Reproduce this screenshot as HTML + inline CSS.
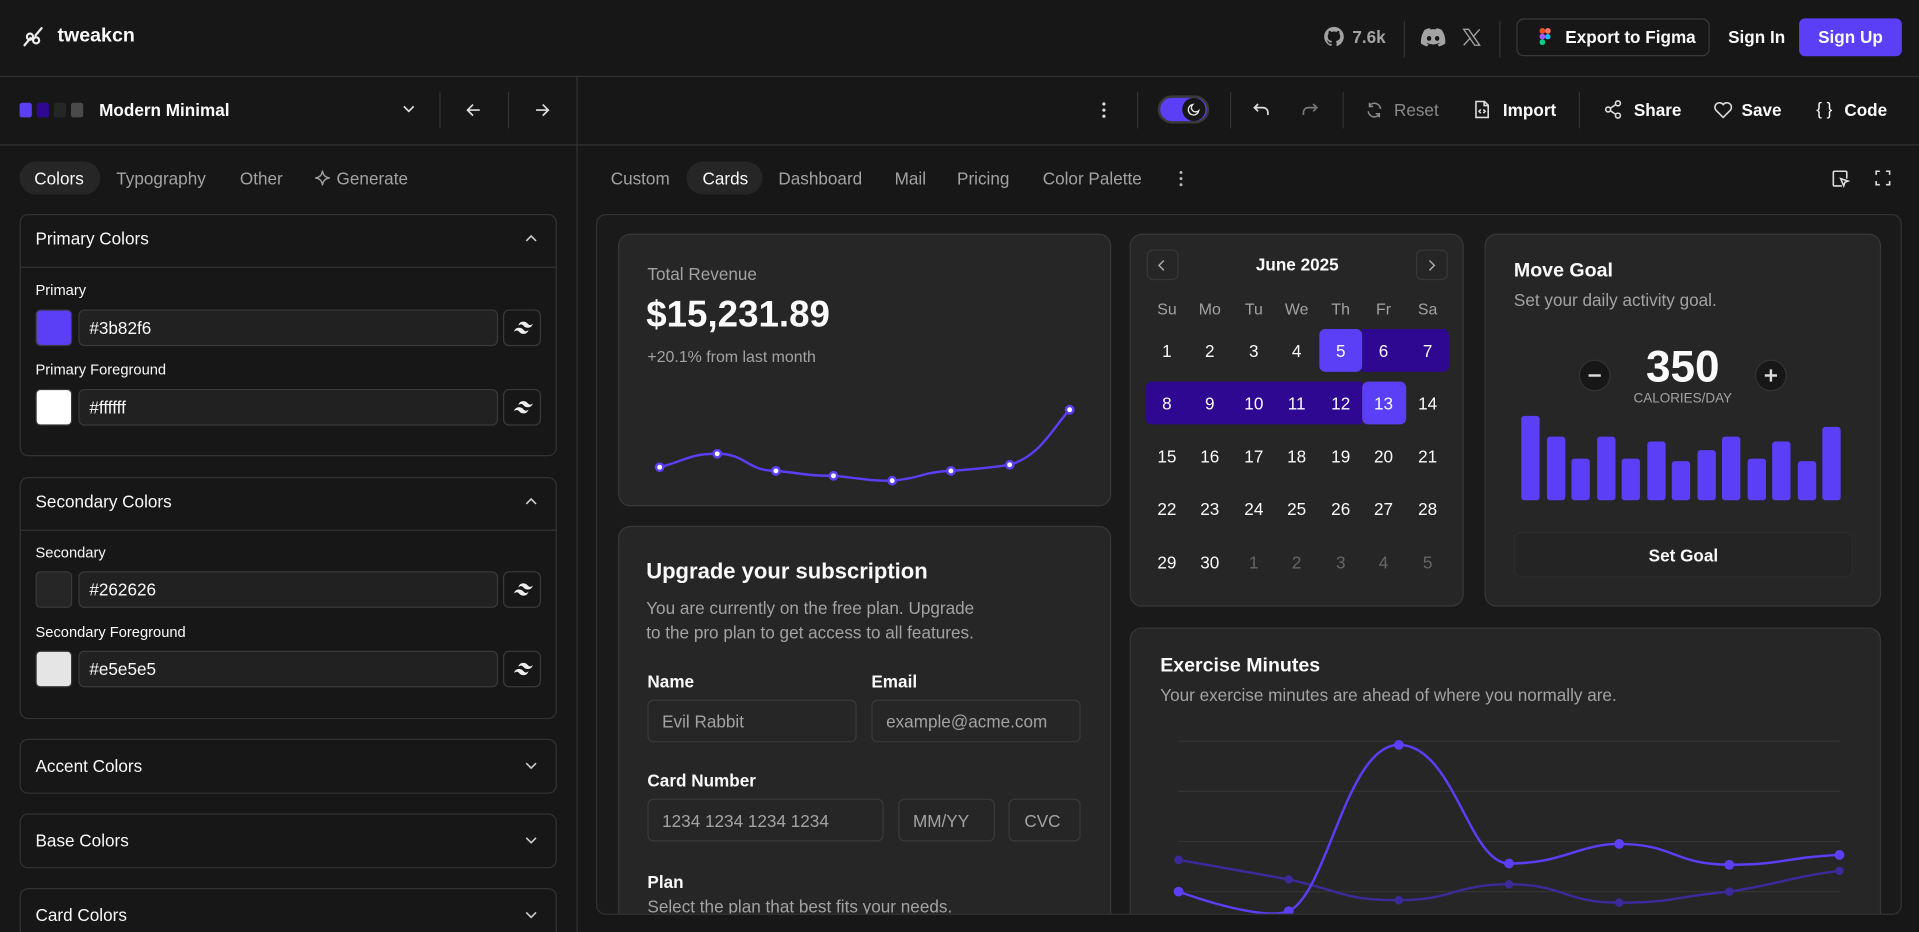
<!DOCTYPE html>
<html><head><meta charset="utf-8">
<style>
*{box-sizing:border-box;margin:0;padding:0}
html,body{width:1919px;height:932px;overflow:hidden;background:#171717}
body{font-family:"Liberation Sans",sans-serif;color:#fafafa;position:relative}
#s{position:absolute;left:0;top:0;width:1568px;height:762px;overflow:hidden;transform:scale(1.22385,1.2231);transform-origin:0 0;background:#171717}
.a{position:absolute}
.t{position:absolute;white-space:nowrap;line-height:1}
.g{color:#a3a3a3}
.hl{position:absolute;background:#333;height:1px}
.vl{position:absolute;background:#333;width:1px}
.card{position:absolute;background:#262626;border:1px solid #383838;border-radius:10px;overflow:hidden}
.box{position:absolute;border:1px solid #333;border-radius:7px;background:#171717}
.inp{position:absolute;border:1px solid #3a3a3a;border-radius:5px;background:#212121}
svg{position:absolute;overflow:visible}
.cal{position:absolute;width:35px;text-align:center;font-size:14px;line-height:1}
.tw{position:absolute;width:31px;height:30px;border:1px solid #3a3a3a;border-radius:5px;background:#171717}
.tw svg{left:8px;top:9px}
</style></head><body><div id="s">

<!-- header -->
<svg style="left:18px;top:21px" width="18" height="18" viewBox="0 0 18 18" fill="none" stroke="#eee" stroke-width="1.8" stroke-linecap="round"><path d="M2 16 L7 10 M11 8 L16 2 M4 9 a2.5 2.5 0 1 0 5 0 a2.5 2.5 0 1 0 -5 0 M9 12 a2.5 2.5 0 1 0 5 0 a2.5 2.5 0 1 0 -5 0"/></svg>
<div class="t" style="left:47px;top:22px;font-size:16px;font-weight:700">tweakcn</div>

<svg style="left:1082px;top:22px" width="16" height="16" viewBox="0 0 16 16"><path fill="#a3a3a3" d="M8 0C3.6 0 0 3.6 0 8c0 3.5 2.3 6.5 5.5 7.6.4.1.5-.2.5-.4v-1.4c-2.2.5-2.7-1-2.7-1-.4-.9-.9-1.2-.9-1.2-.7-.5.1-.5.1-.5.8.1 1.2.8 1.2.8.7 1.2 1.9.9 2.300.7.1-.5.3-.9.5-1.1-1.8-.2-3.600-.9-3.600-4 0-.9.3-1.600.8-2.1-.1-.2-.4-1 .1-2.1 0 0 .7-.2 2.2.8.6-.2 1.3-.3 2-.3s1.4.1 2 .3c1.5-1 2.2-.8 2.2-.8.4 1.1.2 1.9.1 2.1.5.6.8 1.3.8 2.1 0 3.1-1.9 3.8-3.6 4 .3.3.6.8.6 1.5v2.2c0 .2.1.5.6.4C13.7 14.5 16 11.5 16 8c0-4.4-3.6-8-8-8z"/></svg>
<div class="t g" style="left:1105px;top:23px;font-size:14px;font-weight:700">7.6k</div>
<div class="vl" style="left:1147px;top:17px;height:30px"></div>
<svg style="left:1161px;top:23px" width="20" height="15" viewBox="0 0 20 15"><path fill="#a3a3a3" d="M16.9 1.3A16.5 16.5 0 0 0 12.8 0l-.5 1a15 15 0 0 0-4.6 0L7.2 0a16.5 16.5 0 0 0-4.1 1.3C.5 5.2-.2 9 .1 12.7A16.6 16.6 0 0 0 5.2 15l1-1.7a10.7 10.7 0 0 1-1.6-.8l.4-.3a11.8 11.8 0 0 0 10 0l.4.3-1.6.8 1 1.7a16.5 16.5 0 0 0 5.1-2.3c.4-4.3-.7-8.1-3-11.4zM6.7 10.4c-1 0-1.8-.9-1.8-2s.8-2 1.8-2 1.8.9 1.8 2-.8 2-1.8 2zm6.6 0c-1 0-1.8-.9-1.8-2s.8-2 1.8-2 1.8.9 1.8 2-.8 2-1.8 2z"/></svg>
<svg style="left:1195px;top:23px" width="15" height="15" viewBox="0 0 15 15" fill="none" stroke="#a3a3a3" stroke-width="1.1"><path d="M1 1h4l9 13h-4z M14 1L8.5 7.3 M1 14l5.6-6.3"/></svg>
<div class="vl" style="left:1225px;top:17px;height:30px"></div>
<div class="a" style="left:1239px;top:15px;width:158px;height:31px;border:1px solid #3a3a3a;border-radius:6px"></div>
<svg style="left:1258px;top:23px" width="9" height="14" viewBox="0 0 9 14"><rect x="0" y="0" width="4.5" height="4.6" rx="2" fill="#f24e1e"/><rect x="4.5" y="0" width="4.5" height="4.6" rx="2" fill="#ff7262"/><rect x="0" y="4.6" width="4.5" height="4.6" rx="2" fill="#a259ff"/><circle cx="6.7" cy="7" r="2.2" fill="#1abcfe"/><rect x="0" y="9.2" width="4.5" height="4.6" rx="2" fill="#0acf83"/></svg>
<div class="t" style="left:1279px;top:23px;font-size:14px;font-weight:700">Export to Figma</div>
<div class="t" style="left:1412px;top:23px;font-size:14px;font-weight:700">Sign In</div>
<div class="a" style="left:1470px;top:15px;width:84px;height:31px;background:#5b3ff6;border-radius:5px"></div>
<div class="t" style="left:1470px;top:23px;width:84px;text-align:center;font-size:14px;font-weight:700">Sign Up</div>

<div class="hl" style="left:0;top:62px;width:1568px"></div>

<!-- row2 left -->
<div class="a" style="left:16px;top:84px;width:10px;height:12px;background:#5b3ff6;border-radius:2px"></div>
<div class="a" style="left:30px;top:84px;width:10px;height:12px;background:#2e0891;border-radius:2px"></div>
<div class="a" style="left:44px;top:84px;width:10px;height:12px;background:#262626;border-radius:2px"></div>
<div class="a" style="left:58px;top:84px;width:10px;height:12px;background:#4a4a4a;border-radius:2px"></div>
<div class="t" style="left:81px;top:83px;font-size:14px;font-weight:700">Modern Minimal</div>
<svg style="left:329px;top:86px" width="10" height="7" viewBox="0 0 10 7" fill="none" stroke="#ddd" stroke-width="1.4"><path d="M1 1l4 4 4-4"/></svg>
<div class="vl" style="left:359px;top:75px;height:30px"></div>
<svg style="left:381px;top:84px" width="12" height="12" viewBox="0 0 12 12" fill="none" stroke="#ddd" stroke-width="1.4"><path d="M11 6H1M5.5 1.5L1 6l4.5 4.5"/></svg>
<div class="vl" style="left:415px;top:75px;height:30px"></div>
<svg style="left:437px;top:84px" width="12" height="12" viewBox="0 0 12 12" fill="none" stroke="#ddd" stroke-width="1.4"><path d="M1 6h10M6.5 1.5L11 6l-4.5 4.5"/></svg>
<div class="vl" style="left:471px;top:63px;height:699px"></div>

<!-- row2 right -->
<svg style="left:900px;top:83px" width="4" height="14"><circle cx="2" cy="2" r="1.3" fill="#ddd"/><circle cx="2" cy="7" r="1.3" fill="#ddd"/><circle cx="2" cy="12" r="1.3" fill="#ddd"/></svg>
<div class="vl" style="left:929px;top:75px;height:30px"></div>
<div class="a" style="left:946px;top:78px;width:42px;height:23px;border-radius:12px;background:#5b3ff6;border:2px solid #3a3a3a"></div>
<div class="a" style="left:966px;top:80px;width:19px;height:19px;border-radius:50%;background:#171717"></div>
<svg style="left:970px;top:84px" width="11" height="11" viewBox="0 0 11 11" fill="none" stroke="#eee" stroke-width="1.1"><path d="M9.5 6.5A4.3 4.3 0 1 1 4.5 1.5a3.3 3.3 0 0 0 5 5z"/></svg>
<div class="vl" style="left:1005px;top:75px;height:30px"></div>
<svg style="left:1024px;top:84px" width="14" height="11" viewBox="0 0 14 11" fill="none" stroke="#ddd" stroke-width="1.4"><path d="M4 1L1 4l3 3M1 4h7a4 4 0 0 1 4 4v2"/></svg>
<svg style="left:1063px;top:84px" width="14" height="11" viewBox="0 0 14 11" fill="none" stroke="#777" stroke-width="1.4"><path d="M10 1l3 3-3 3M13 4H6a4 4 0 0 0-4 4v2"/></svg>
<div class="vl" style="left:1097px;top:75px;height:30px"></div>
<svg style="left:1116px;top:83px" width="14" height="14" viewBox="0 0 14 14" fill="none" stroke="#8a8a8a" stroke-width="1.3"><path d="M12 6a5 5 0 0 0-9-2.5M2 8a5 5 0 0 0 9 2.5M3 1v3h3M11 13v-3H8"/></svg>
<div class="t" style="left:1139px;top:83px;font-size:14px;color:#8a8a8a">Reset</div>
<svg style="left:1205px;top:82px" width="12" height="15" viewBox="0 0 12 15" fill="none" stroke="#ddd" stroke-width="1.3"><path d="M1 1h7l3 3v10H1z M7.7 1v3.3H11 M5 7.5l-1.5 1.5L5 10.5M7 7.5l1.5 1.5L7 10.5"/></svg>
<div class="t" style="left:1228px;top:83px;font-size:14px;font-weight:700">Import</div>
<div class="vl" style="left:1290px;top:75px;height:30px"></div>
<svg style="left:1311px;top:82px" width="14" height="15" viewBox="0 0 14 15" fill="none" stroke="#ddd" stroke-width="1.3"><circle cx="11" cy="2.5" r="2"/><circle cx="3" cy="7.5" r="2"/><circle cx="11" cy="12.5" r="2"/><path d="M4.8 6.5l4.4-3M4.8 8.5l4.4 3"/></svg>
<div class="t" style="left:1335px;top:83px;font-size:14px;font-weight:700">Share</div>
<svg style="left:1400px;top:83px" width="16" height="14" viewBox="0 0 16 14" fill="none" stroke="#ddd" stroke-width="1.3"><path d="M8 13L2 7a3.5 3.5 0 0 1 6-4.5A3.5 3.5 0 0 1 14 7z"/></svg>
<div class="t" style="left:1423px;top:83px;font-size:14px;font-weight:700">Save</div>
<div class="t" style="left:1484px;top:82px;font-size:14px">{ }</div>
<div class="t" style="left:1507px;top:83px;font-size:14px;font-weight:700">Code</div>

<div class="hl" style="left:0;top:118px;width:1568px"></div>

<!-- tabs -->
<div class="a" style="left:16px;top:132px;width:66px;height:27px;border-radius:14px;background:#262626"></div>
<div class="t" style="left:28px;top:139px;font-size:14px">Colors</div>
<div class="t g" style="left:95px;top:139px;font-size:14px">Typography</div>
<div class="t g" style="left:196px;top:139px;font-size:14px">Other</div>
<svg style="left:257px;top:139px" width="13" height="13" viewBox="0 0 13 13" fill="none" stroke="#a3a3a3" stroke-width="1.1"><path d="M6.5 0.5Q7 6 12.5 6.5Q7 7 6.5 12.5Q6 7 0.5 6.5Q6 6 6.5 0.5z"/></svg>
<div class="t g" style="left:275px;top:139px;font-size:14px">Generate</div>

<div class="t g" style="left:499px;top:139px;font-size:14px">Custom</div>
<div class="a" style="left:561px;top:132px;width:62px;height:27px;border-radius:14px;background:#262626"></div>
<div class="t" style="left:574px;top:139px;font-size:14px">Cards</div>
<div class="t g" style="left:636px;top:139px;font-size:14px">Dashboard</div>
<div class="t g" style="left:731px;top:139px;font-size:14px">Mail</div>
<div class="t g" style="left:782px;top:139px;font-size:14px">Pricing</div>
<div class="t g" style="left:852px;top:139px;font-size:14px">Color Palette</div>
<svg style="left:963px;top:139px" width="4" height="14"><circle cx="2" cy="2" r="1.2" fill="#bbb"/><circle cx="2" cy="7" r="1.2" fill="#bbb"/><circle cx="2" cy="12" r="1.2" fill="#bbb"/></svg>
<svg style="left:1497px;top:139px" width="14" height="14" viewBox="0 0 14 14" fill="none" stroke="#ddd" stroke-width="1.3"><path d="M8 13H2a1 1 0 0 1-1-1V2a1 1 0 0 1 1-1h9a1 1 0 0 1 1 1v5 M7 7l6 2-2.5 1L9.5 13z"/></svg>
<svg style="left:1532px;top:139px" width="13" height="13" viewBox="0 0 13 13" fill="none" stroke="#ddd" stroke-width="1.3"><path d="M1 4V1h3M9 1h3v3M12 9v3H9M4 12H1V9"/></svg>

<!-- left panel boxes -->
<div class="box" style="left:16px;top:175px;width:439px;height:198px"></div>
<div class="hl" style="left:17px;top:218px;width:437px"></div>
<div class="t" style="left:29px;top:188px;font-size:14px">Primary Colors</div>
<svg style="left:429px;top:192px" width="10" height="6" viewBox="0 0 10 6" fill="none" stroke="#ccc" stroke-width="1.3"><path d="M1 5l4-4 4 4"/></svg>
<div class="t" style="left:29px;top:231px;font-size:12px">Primary</div>
<div class="a" style="left:29px;top:253px;width:30px;height:30px;border-radius:4px;background:#5b3ff6;border:1px solid #3a3a3a"></div>
<div class="inp" style="left:64px;top:253px;width:343px;height:30px"></div>
<div class="t" style="left:73px;top:261px;font-size:14px">#3b82f6</div>
<div class="tw" style="left:411px;top:253px"><svg width="14" height="10" viewBox="0 0 14 10" fill="#eee"><path d="M3.5 3.3C4.2.9 5.6 0 7.7 0c3 0 3.400 2.300 4.900 2.700 1 .3 1.900-.1 2.800-1.100C14.700 4 13.300 5 11.200 5 8.200 5 7.900 2.700 6.300 2.300c-1-.3-1.900.1-2.800 1zM0 8.300C.7 5.900 2.100 5 4.200 5c3 0 3.400 2.300 4.900 2.700 1 .3 1.900-.1 2.800-1.100-.7 2.400-2.100 3.400-4.200 3.400C4.700 10 4.400 7.700 2.800 7.300c-1-.3-1.900.1-2.800 1z"/></svg></div>
<div class="t" style="left:29px;top:296px;font-size:12px">Primary Foreground</div>
<div class="a" style="left:29px;top:318px;width:30px;height:30px;border-radius:4px;background:#fff;border:1px solid #3a3a3a"></div>
<div class="inp" style="left:64px;top:318px;width:343px;height:30px"></div>
<div class="t" style="left:73px;top:326px;font-size:14px">#ffffff</div>
<div class="tw" style="left:411px;top:318px"><svg width="14" height="10" viewBox="0 0 14 10" fill="#eee"><path d="M3.5 3.3C4.2.9 5.6 0 7.7 0c3 0 3.400 2.300 4.900 2.700 1 .3 1.900-.1 2.800-1.100C14.700 4 13.300 5 11.200 5 8.200 5 7.900 2.700 6.300 2.300c-1-.3-1.900.1-2.800 1zM0 8.300C.7 5.900 2.100 5 4.200 5c3 0 3.400 2.300 4.900 2.700 1 .3 1.900-.1 2.800-1.100-.7 2.400-2.100 3.400-4.200 3.400C4.700 10 4.400 7.700 2.800 7.300c-1-.3-1.900.1-2.800 1z"/></svg></div>

<div class="box" style="left:16px;top:390px;width:439px;height:198px"></div>
<div class="hl" style="left:17px;top:433px;width:437px"></div>
<div class="t" style="left:29px;top:403px;font-size:14px">Secondary Colors</div>
<svg style="left:429px;top:407px" width="10" height="6" viewBox="0 0 10 6" fill="none" stroke="#ccc" stroke-width="1.3"><path d="M1 5l4-4 4 4"/></svg>
<div class="t" style="left:29px;top:446px;font-size:12px">Secondary</div>
<div class="a" style="left:29px;top:467px;width:30px;height:30px;border-radius:4px;background:#262626;border:1px solid #3a3a3a"></div>
<div class="inp" style="left:64px;top:467px;width:343px;height:30px"></div>
<div class="t" style="left:73px;top:475px;font-size:14px">#262626</div>
<div class="tw" style="left:411px;top:467px"><svg width="14" height="10" viewBox="0 0 14 10" fill="#eee"><path d="M3.5 3.3C4.2.9 5.6 0 7.7 0c3 0 3.400 2.300 4.900 2.700 1 .3 1.900-.1 2.800-1.100C14.700 4 13.300 5 11.200 5 8.200 5 7.900 2.700 6.300 2.300c-1-.3-1.900.1-2.800 1zM0 8.300C.7 5.900 2.100 5 4.200 5c3 0 3.400 2.300 4.900 2.700 1 .3 1.900-.1 2.800-1.100-.7 2.400-2.100 3.400-4.200 3.400C4.700 10 4.400 7.700 2.800 7.300c-1-.3-1.900.1-2.800 1z"/></svg></div>
<div class="t" style="left:29px;top:511px;font-size:12px">Secondary Foreground</div>
<div class="a" style="left:29px;top:532px;width:30px;height:30px;border-radius:4px;background:#e5e5e5;border:1px solid #3a3a3a"></div>
<div class="inp" style="left:64px;top:532px;width:343px;height:30px"></div>
<div class="t" style="left:73px;top:540px;font-size:14px">#e5e5e5</div>
<div class="tw" style="left:411px;top:532px"><svg width="14" height="10" viewBox="0 0 14 10" fill="#eee"><path d="M3.5 3.3C4.2.9 5.6 0 7.7 0c3 0 3.400 2.300 4.900 2.700 1 .3 1.900-.1 2.800-1.100C14.700 4 13.300 5 11.200 5 8.200 5 7.900 2.700 6.300 2.300c-1-.3-1.900.1-2.800 1zM0 8.300C.7 5.900 2.100 5 4.200 5c3 0 3.400 2.300 4.900 2.700 1 .3 1.900-.1 2.800-1.100-.7 2.400-2.100 3.400-4.200 3.400C4.700 10 4.400 7.700 2.800 7.300c-1-.3-1.900.1-2.800 1z"/></svg></div>

<div class="box" style="left:16px;top:604px;width:439px;height:45px"></div>
<div class="t" style="left:29px;top:619px;font-size:14px">Accent Colors</div>
<svg style="left:429px;top:623px" width="10" height="6" viewBox="0 0 10 6" fill="none" stroke="#ccc" stroke-width="1.3"><path d="M1 1l4 4 4-4"/></svg>
<div class="box" style="left:16px;top:665px;width:439px;height:45px"></div>
<div class="t" style="left:29px;top:680px;font-size:14px">Base Colors</div>
<svg style="left:429px;top:684px" width="10" height="6" viewBox="0 0 10 6" fill="none" stroke="#ccc" stroke-width="1.3"><path d="M1 1l4 4 4-4"/></svg>
<div class="box" style="left:16px;top:726px;width:439px;height:45px"></div>
<div class="t" style="left:29px;top:741px;font-size:14px">Card Colors</div>
<svg style="left:429px;top:745px" width="10" height="6" viewBox="0 0 10 6" fill="none" stroke="#ccc" stroke-width="1.3"><path d="M1 1l4 4 4-4"/></svg>

<!-- preview container -->
<div class="a" style="left:487px;top:175px;width:1067px;height:573px;border:1px solid #333;border-radius:8px;overflow:hidden;background:#1a1a1a">
<div class="a" style="left:-488px;top:-176px;width:1568px;height:749px;overflow:hidden">

<!-- revenue -->
<div class="card" style="left:505px;top:191px;width:403px;height:223px"></div>
<div class="t g" style="left:529px;top:217px;font-size:14px">Total Revenue</div>
<div class="t" style="left:528px;top:243px;font-size:30px;font-weight:700">$15,231.89</div>
<div class="t g" style="left:529px;top:285px;font-size:13px">+20.1% from last month</div>
<svg style="left:0;top:0" width="1568" height="749" fill="none">
<path d="M539,382 C562,376 563,371 586,371 C610,371 610,385 634,385 C657,387 657,389 681,389 C705,391 705,393 729,393 C753,391 753,386 777,385 C801,383 805,383 825,380 C850,373 860,350 874,335" stroke="#5b3ff6" stroke-width="2"/>
<g fill="#fff" stroke="#5b3ff6" stroke-width="2"><circle cx="539" cy="382" r="3"/><circle cx="586" cy="371" r="3"/><circle cx="634" cy="385" r="3"/><circle cx="681" cy="389" r="3"/><circle cx="729" cy="393" r="3"/><circle cx="777" cy="385" r="3"/><circle cx="825" cy="380" r="3"/><circle cx="874" cy="335" r="3"/></g>
</svg>

<!-- subscription -->
<div class="card" style="left:505px;top:430px;width:403px;height:400px"></div>
<div class="t" style="left:528px;top:458px;font-size:18px;font-weight:700">Upgrade your subscription</div>
<div class="t g" style="left:528px;top:490px;font-size:14px">You are currently on the free plan. Upgrade</div>
<div class="t g" style="left:528px;top:510px;font-size:14px">to the pro plan to get access to all features.</div>
<div class="t" style="left:529px;top:550px;font-size:14px;font-weight:700">Name</div>
<div class="t" style="left:712px;top:550px;font-size:14px;font-weight:700">Email</div>
<div class="inp" style="left:529px;top:572px;width:171px;height:35px;background:#262626"></div>
<div class="t g" style="left:541px;top:583px;font-size:14px">Evil Rabbit</div>
<div class="inp" style="left:712px;top:572px;width:171px;height:35px;background:#262626"></div>
<div class="t g" style="left:724px;top:583px;font-size:14px">example@acme.com</div>
<div class="t" style="left:529px;top:631px;font-size:14px;font-weight:700">Card Number</div>
<div class="inp" style="left:529px;top:653px;width:193px;height:35px;background:#262626"></div>
<div class="t g" style="left:541px;top:664px;font-size:14px">1234 1234 1234 1234</div>
<div class="inp" style="left:734px;top:653px;width:79px;height:35px;background:#262626"></div>
<div class="t g" style="left:746px;top:664px;font-size:14px">MM/YY</div>
<div class="inp" style="left:824px;top:653px;width:59px;height:35px;background:#262626"></div>
<div class="t g" style="left:837px;top:664px;font-size:14px">CVC</div>
<div class="t" style="left:529px;top:714px;font-size:14px;font-weight:700">Plan</div>
<div class="t g" style="left:529px;top:734px;font-size:14px">Select the plan that best fits your needs.</div>

<!-- calendar -->
<div class="card" style="left:923px;top:191px;width:273px;height:305px"></div>
<div class="a" style="left:937px;top:204px;width:26px;height:25px;border:1px solid #383838;border-radius:5px"></div>
<svg style="left:946px;top:212px" width="6" height="10" viewBox="0 0 6 10" fill="none" stroke="#aaa" stroke-width="1.2"><path d="M5 1L1 5l4 4"/></svg>
<div class="a" style="left:1157px;top:204px;width:26px;height:25px;border:1px solid #383838;border-radius:5px"></div>
<svg style="left:1167px;top:212px" width="6" height="10" viewBox="0 0 6 10" fill="none" stroke="#aaa" stroke-width="1.2"><path d="M1 1l4 4-4 4"/></svg>
<div class="t" style="left:1000px;top:209px;width:120px;text-align:center;font-size:14px;font-weight:700">June 2025</div>
<div class="a" style="left:1113px;top:269px;width:71px;height:35px;background:#2e0891;border-radius:0 5px 5px 0"></div>
<div class="a" style="left:1078px;top:269px;width:35px;height:35px;background:#5b3ff6;border-radius:5px"></div>
<div class="a" style="left:936px;top:312px;width:177px;height:35px;background:#2e0891;border-radius:5px 0 0 5px"></div>
<div class="a" style="left:1113px;top:312px;width:36px;height:35px;background:#5b3ff6;border-radius:5px"></div>

<!-- move goal -->
<div class="card" style="left:1213px;top:191px;width:324px;height:305px"></div>
<div class="t" style="left:1237px;top:214px;font-size:16px;font-weight:700">Move Goal</div>
<div class="t g" style="left:1237px;top:238px;font-size:14px">Set your daily activity goal.</div>
<div class="a" style="left:1290px;top:294px;width:26px;height:26px;border-radius:50%;background:#171717;border:1px solid #333"></div>
<div class="a" style="left:1298px;top:306px;width:10px;height:1.5px;background:#ddd"></div>
<div class="a" style="left:1434px;top:294px;width:26px;height:26px;border-radius:50%;background:#171717;border:1px solid #333"></div>
<div class="a" style="left:1442px;top:306px;width:10px;height:1.5px;background:#ddd"></div>
<div class="a" style="left:1446.3px;top:302px;width:1.5px;height:10px;background:#ddd"></div>
<div class="t" style="left:1325px;top:282px;width:100px;text-align:center;font-size:36px;font-weight:700">350</div>
<div class="t g" style="left:1315px;top:321px;width:120px;text-align:center;font-size:11px">CALORIES/DAY</div>
<svg style="left:0;top:0" width="1568" height="749"><g fill="#5b3ff6">
<rect x="1243" y="340" width="15" height="69" rx="2.5"/><rect x="1264" y="357" width="15" height="52" rx="2.5"/><rect x="1284" y="375" width="15" height="34" rx="2.5"/><rect x="1305" y="357" width="15" height="52" rx="2.5"/><rect x="1325" y="375" width="15" height="34" rx="2.5"/><rect x="1346" y="361" width="15" height="48" rx="2.5"/><rect x="1366" y="377" width="15" height="32" rx="2.5"/><rect x="1387" y="368" width="15" height="41" rx="2.5"/><rect x="1407" y="357" width="15" height="52" rx="2.5"/><rect x="1428" y="375" width="15" height="34" rx="2.5"/><rect x="1448" y="361" width="15" height="48" rx="2.5"/><rect x="1469" y="377" width="15" height="32" rx="2.5"/><rect x="1489" y="349" width="15" height="60" rx="2.5"/></g></svg>
<div class="a" style="left:1237px;top:435px;width:277px;height:37px;border-radius:6px;background:#242424;border:1px solid #2c2c2c"></div>
<div class="t" style="left:1237px;top:447px;width:277px;text-align:center;font-size:14px;font-weight:700">Set Goal</div>

<!-- exercise -->
<div class="card" style="left:923px;top:513px;width:614px;height:400px"></div>
<div class="t" style="left:948px;top:537px;font-size:16px;font-weight:700">Exercise Minutes</div>
<div class="t g" style="left:948px;top:561px;font-size:14px">Your exercise minutes are ahead of where you normally are.</div>
<svg style="left:0;top:0" width="1568" height="749" fill="none">
<g stroke="#333" stroke-width="1"><path d="M963 606H1503M963 647H1503M963 688H1503M963 729H1503"/></g>
<path d="M963,703 C1008,711 1008,711 1053,719 C1098,729 1098,736 1143,736 C1188,736 1188,723 1233,723 C1278,723 1278,738 1323,738 C1368,738 1368,733 1413,729 C1458,722 1458,718 1503,712" stroke="#3a2a9a" stroke-width="2"/>
<g fill="#3a2a9a"><circle cx="963" cy="703" r="3.5"/><circle cx="1053" cy="719" r="3.5"/><circle cx="1143" cy="736" r="3.5"/><circle cx="1233" cy="723" r="3.5"/><circle cx="1323" cy="738" r="3.5"/><circle cx="1413" cy="729" r="3.5"/><circle cx="1503" cy="712" r="3.5"/></g>
<path d="M963,729 C1008,745 1040,750 1053,745 C1085,730 1100,609 1143,609 C1188,609 1200,706 1233,706 C1278,706 1290,690 1323,690 C1368,690 1368,707 1413,707 C1458,707 1458,701 1503,699" stroke="#5b3ff6" stroke-width="2"/>
<g fill="#5b3ff6"><circle cx="963" cy="729" r="4"/><circle cx="1053" cy="745" r="4"/><circle cx="1143" cy="609" r="4"/><circle cx="1233" cy="706" r="4"/><circle cx="1323" cy="690" r="4"/><circle cx="1413" cy="707" r="4"/><circle cx="1503" cy="699" r="4"/></g>
</svg>

<div class="cal g" style="left:936px;top:246px;font-size:13px">Su</div>
<div class="cal g" style="left:971px;top:246px;font-size:13px">Mo</div>
<div class="cal g" style="left:1007px;top:246px;font-size:13px">Tu</div>
<div class="cal g" style="left:1042px;top:246px;font-size:13px">We</div>
<div class="cal g" style="left:1078px;top:246px;font-size:13px">Th</div>
<div class="cal g" style="left:1113px;top:246px;font-size:13px">Fr</div>
<div class="cal g" style="left:1149px;top:246px;font-size:13px">Sa</div>

<div class="cal" style="left:936px;top:280px">1</div><div class="cal" style="left:971px;top:280px">2</div><div class="cal" style="left:1007px;top:280px">3</div><div class="cal" style="left:1042px;top:280px">4</div><div class="cal" style="left:1078px;top:280px">5</div><div class="cal" style="left:1113px;top:280px">6</div><div class="cal" style="left:1149px;top:280px">7</div>
<div class="cal" style="left:936px;top:323px">8</div><div class="cal" style="left:971px;top:323px">9</div><div class="cal" style="left:1007px;top:323px">10</div><div class="cal" style="left:1042px;top:323px">11</div><div class="cal" style="left:1078px;top:323px">12</div><div class="cal" style="left:1113px;top:323px">13</div><div class="cal" style="left:1149px;top:323px">14</div>
<div class="cal" style="left:936px;top:366px">15</div><div class="cal" style="left:971px;top:366px">16</div><div class="cal" style="left:1007px;top:366px">17</div><div class="cal" style="left:1042px;top:366px">18</div><div class="cal" style="left:1078px;top:366px">19</div><div class="cal" style="left:1113px;top:366px">20</div><div class="cal" style="left:1149px;top:366px">21</div>
<div class="cal" style="left:936px;top:409px">22</div><div class="cal" style="left:971px;top:409px">23</div><div class="cal" style="left:1007px;top:409px">24</div><div class="cal" style="left:1042px;top:409px">25</div><div class="cal" style="left:1078px;top:409px">26</div><div class="cal" style="left:1113px;top:409px">27</div><div class="cal" style="left:1149px;top:409px">28</div>
<div class="cal" style="left:936px;top:453px">29</div><div class="cal" style="left:971px;top:453px">30</div><div class="cal" style="left:1007px;top:453px;color:#666">1</div><div class="cal" style="left:1042px;top:453px;color:#666">2</div><div class="cal" style="left:1078px;top:453px;color:#666">3</div><div class="cal" style="left:1113px;top:453px;color:#666">4</div><div class="cal" style="left:1149px;top:453px;color:#666">5</div>

</div></div>
</div></body></html>
